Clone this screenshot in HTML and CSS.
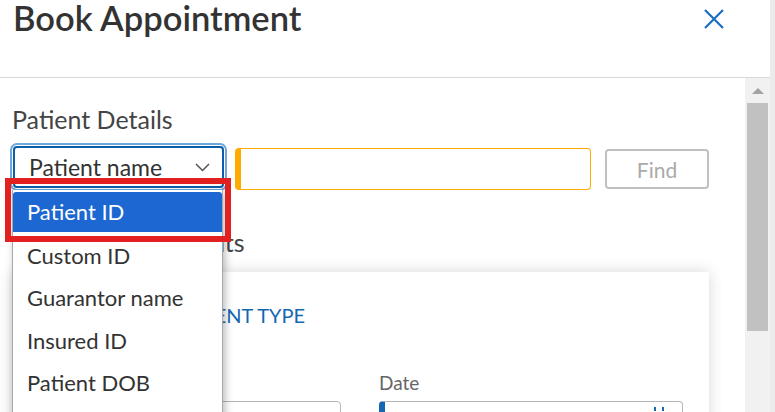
FILE: index.html
```html
<!DOCTYPE html>
<html>
<head>
<meta charset="utf-8">
<link rel="stylesheet" href="styles.css">
</head>
<body>
<div class="modal">
  <div class="header">
    <h1 class="title">Book Appointment</h1>
    <svg class="close" width="22" height="22" viewBox="0 0 22 22"><path d="M2 2 L20 20 M20 2 L2 20" stroke="#1a6ec0" stroke-width="2.2" fill="none"/></svg>
  </div>
  <div class="body">
    <div class="content">
      <h2 class="section">Patient Details</h2>
      <div class="search-row">
        <div class="select-wrap">
          <div class="select">
            <span>Patient name</span>
            <svg width="15" height="9" viewBox="0 0 15 9"><path d="M1 1 L7.5 7.5 L14 1" stroke="#555" stroke-width="1.5" fill="none"/></svg>
          </div>
          <ul class="menu">
            <li class="active">Patient ID</li>
            <li>Custom ID</li>
            <li>Guarantor name</li>
            <li>Insured ID</li>
            <li>Patient DOB</li>
          </ul>
          <div class="mark"></div>
        </div>
        <div class="search-input"></div>
        <button class="find">Find</button>
      </div>
      <h2 class="section second">Future Appointments</h2>
      <div class="card">
        <div class="card-title">SELECT APPOINTMENT TYPE</div>
        <div class="fields">
          <div class="field">
            <label>Location</label>
            <div class="box"></div>
          </div>
          <div class="field">
            <label>Date</label>
            <div class="box date">
              <svg class="cal" width="14" height="14" viewBox="0 0 14 14"><path d="M3 0 V4 M11 0 V4" stroke="#1467b3" stroke-width="2"/></svg>
            </div>
          </div>
        </div>
      </div>
    </div>
    <div class="scrollbar">
      <div class="arrow"></div>
      <div class="thumb"></div>
    </div>
  </div>
</div>
</body>
</html>
```
FILE: styles.css
```css
* { box-sizing: border-box; }
html, body { margin: 0; padding: 0; }
body {
  background: #ebebeb;
  font-family: Lato, "Noto Sans", sans-serif;
  color: #333;
  width: 775px;
  height: 412px;
  overflow: hidden;
}
.modal {
  width: 770px;
  height: 412px;
  background: #fff;
  display: flex;
  flex-direction: column;
  overflow: hidden;
}
.header {
  height: 78px;
  flex: none;
  border-bottom: 1px solid #d9d9d9;
  display: flex;
  justify-content: space-between;
  align-items: flex-start;
  padding: 0 45px 0 13px;
}
.title {
  margin: 0;
  font-size: 34.5px;
  line-height: 36px;
  font-weight: 600;
  color: #333;
}
.close { margin-top: 8px; }
.body {
  flex: 1;
  display: flex;
  min-height: 0;
}
.content {
  flex: 1;
  padding: 26px 36px 0 12px;
  min-width: 0;
}
.section {
  margin: 0;
  font-size: 25px;
  line-height: 30px;
  font-weight: 400;
  color: #444;
}
.search-row {
  display: flex;
  align-items: flex-start;
  margin-top: 12px;
  height: 44px;
}
.select-wrap {
  position: relative;
  margin-left: 1px;
  width: 211px;
  z-index: 2;
}
.select {
  height: 42px;
  border: 2px solid #0b5ea8;
  border-radius: 4px;
  box-shadow: 0 0 0 1px #fff, 0 0 0 3px #6ea7da;
  display: flex;
  align-items: center;
  justify-content: space-between;
  padding: 0 12px 0 14px;
  font-size: 23px;
  color: #333;
}
.menu {
  position: absolute;
  left: -1px;
  top: 44px;
  width: 211px;
  margin: 0;
  padding: 2px 0 0 0;
  list-style: none;
  background: #fff;
  border: 1px solid #a8a8a8;
  border-top: none;
  box-shadow: 2px 3px 8px rgba(0,0,0,0.28);
  height: 260px;
}
.menu li {
  height: 42.5px;
  line-height: 42.5px;
  padding-left: 14px;
  font-size: 22px;
  color: #333;
}
.menu li.active {
  background: #1c67d1;
  color: #fff;
  height: 40px;
  line-height: 40px;
  margin-bottom: 2.5px;
  border-radius: 3px 3px 0 0;
}
.mark {
  position: absolute;
  left: -8px;
  top: 32px;
  width: 226px;
  height: 64px;
  border: 6px solid #e2201f;
  z-index: 3;
}
.search-input {
  margin-left: 11px;
  margin-top: 2px;
  width: 356px;
  height: 42px;
  border: 1px solid #ffab00;
  border-left: 6px solid #ffab00;
  border-radius: 4px;
}
.find {
  margin-left: 14px;
  margin-top: 3px;
  width: 104px;
  height: 40px;
  background: #fff;
  border: 2px solid #c0c0c0;
  border-radius: 4px;
  font-family: inherit;
  font-size: 21px;
  color: #aaa;
  padding: 0;
}
.section.second {
  margin-top: 37px;
}
.card {
  margin-top: 15px;
  background: #fff;
  box-shadow: 0 0 14px rgba(0,0,0,0.16);
  padding: 30px 25px 0 25px;
  height: 200px;
}
.card-title {
  font-size: 20px;
  line-height: 26px;
  color: #1467b3;
}
.fields {
  display: grid;
  grid-template-columns: 304px 304px;
  column-gap: 38px;
  margin-top: 43px;
}
.field label {
  display: block;
  font-size: 19px;
  line-height: 24px;
  color: #666;
  margin-bottom: 6px;
}
.box {
  height: 40px;
  border: 1px solid #b5b5b5;
  border-radius: 4px;
  position: relative;
}
.box.date {
  border-left: 6px solid #1467b3;
}
.cal {
  position: absolute;
  right: 16px;
  top: 5px;
}
.scrollbar {
  width: 25px;
  flex: none;
  background: #f1f1f1;
  display: flex;
  flex-direction: column;
  align-items: center;
}
.arrow {
  margin-top: 10px;
  width: 0;
  height: 0;
  border-left: 6px solid transparent;
  border-right: 6px solid transparent;
  border-bottom: 6px solid #a3a3a3;
}
.thumb {
  margin-top: 9px;
  width: 21px;
  height: 228px;
  background: #c1c1c1;
}
```
